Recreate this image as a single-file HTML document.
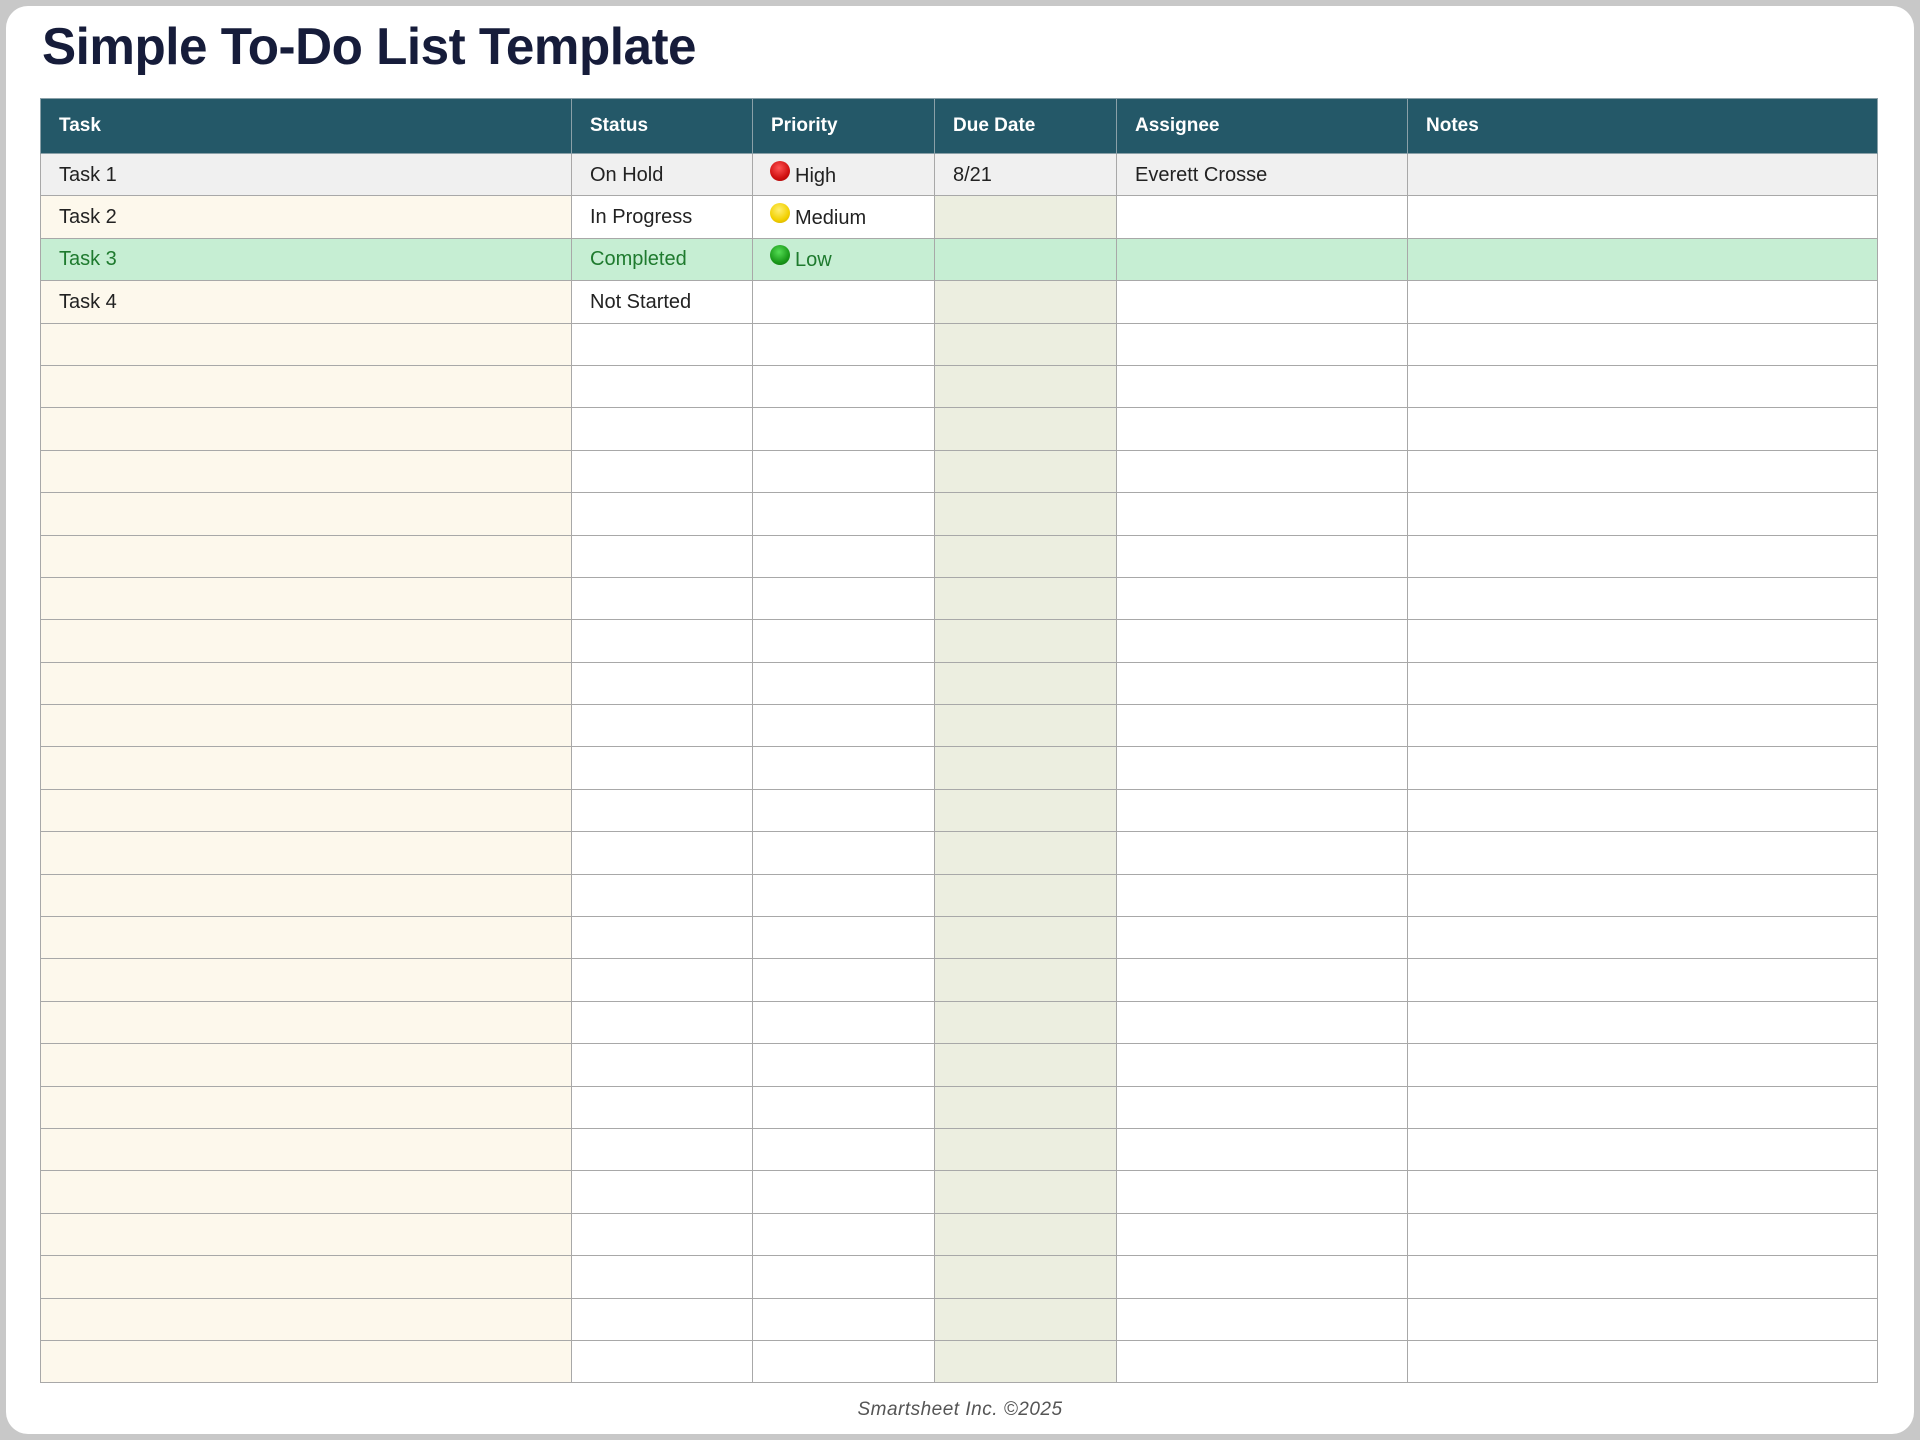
<!DOCTYPE html>
<html><head><meta charset="utf-8"><style>
body{margin:0;width:1920px;height:1440px;background:#c8c8c8;font-family:"Liberation Sans",sans-serif;overflow:hidden;position:relative}
.panel{position:absolute;left:6px;top:6px;width:1908px;height:1428px;background:#fff;border-radius:22px}
h1{position:absolute;left:42px;top:17px;margin:0;font-size:52px;font-weight:bold;color:#161c3a;white-space:nowrap;transform-origin:left top;transform:scaleX(0.985);letter-spacing:-0.5px}
table{position:absolute;left:40px;top:98px;border-collapse:collapse;table-layout:fixed;width:1837px}
td,th{border:1.5px solid #a8a8a8;padding:0 0 0 18px;text-align:left;font-size:20px;line-height:22px;color:#222;height:41.4px;white-space:nowrap;overflow:hidden}
th{background:#245868;color:#fff;height:54px;font-size:19px;border-color:#8aa0a8}
td.t{background:#fdf8ec}td.d{background:#eceee0}
tr.g td{background:#f0f0f0}
tr.c td{background:#c6eed3;color:#1e7a2e}
.dot{display:inline-block;width:20px;height:20px;border-radius:50%;vertical-align:-1px;margin-right:5px;margin-left:-1px;position:relative;top:-2px}
.r{background:radial-gradient(circle at 45% 35%,#f55 0,#d01010 60%,#900 100%)}
.y{background:radial-gradient(circle at 45% 35%,#ffef70 0,#f2d000 60%,#c8a000 100%)}
.gr{background:radial-gradient(circle at 45% 35%,#5d5 0,#1a9a1a 60%,#0a6a0a 100%)}
.f{position:absolute;left:0;width:1920px;top:1399px;text-align:center;font-style:italic;color:#555;font-size:19px;letter-spacing:0.5px}
</style></head><body>
<div class="panel"></div>
<h1>Simple To-Do List Template</h1>
<table>
<colgroup><col style="width:531px"><col style="width:181px"><col style="width:182px"><col style="width:182px"><col style="width:291px"><col style="width:470px"></colgroup>
<tr><th>Task</th><th>Status</th><th>Priority</th><th>Due Date</th><th>Assignee</th><th>Notes</th></tr>
<tr class="g"><td>Task 1</td><td>On Hold</td><td><span class="dot r"></span>High</td><td>8/21</td><td>Everett Crosse</td><td></td></tr>
<tr><td class="t">Task 2</td><td>In Progress</td><td><span class="dot y"></span>Medium</td><td class="d"></td><td></td><td></td></tr>
<tr class="c"><td>Task 3</td><td>Completed</td><td><span class="dot gr"></span>Low</td><td></td><td></td><td></td></tr>
<tr><td class="t">Task 4</td><td>Not Started</td><td></td><td class="d"></td><td></td><td></td></tr>
<tr><td class="t"></td><td></td><td></td><td class="d"></td><td></td><td></td></tr>
<tr><td class="t"></td><td></td><td></td><td class="d"></td><td></td><td></td></tr>
<tr><td class="t"></td><td></td><td></td><td class="d"></td><td></td><td></td></tr>
<tr><td class="t"></td><td></td><td></td><td class="d"></td><td></td><td></td></tr>
<tr><td class="t"></td><td></td><td></td><td class="d"></td><td></td><td></td></tr>
<tr><td class="t"></td><td></td><td></td><td class="d"></td><td></td><td></td></tr>
<tr><td class="t"></td><td></td><td></td><td class="d"></td><td></td><td></td></tr>
<tr><td class="t"></td><td></td><td></td><td class="d"></td><td></td><td></td></tr>
<tr><td class="t"></td><td></td><td></td><td class="d"></td><td></td><td></td></tr>
<tr><td class="t"></td><td></td><td></td><td class="d"></td><td></td><td></td></tr>
<tr><td class="t"></td><td></td><td></td><td class="d"></td><td></td><td></td></tr>
<tr><td class="t"></td><td></td><td></td><td class="d"></td><td></td><td></td></tr>
<tr><td class="t"></td><td></td><td></td><td class="d"></td><td></td><td></td></tr>
<tr><td class="t"></td><td></td><td></td><td class="d"></td><td></td><td></td></tr>
<tr><td class="t"></td><td></td><td></td><td class="d"></td><td></td><td></td></tr>
<tr><td class="t"></td><td></td><td></td><td class="d"></td><td></td><td></td></tr>
<tr><td class="t"></td><td></td><td></td><td class="d"></td><td></td><td></td></tr>
<tr><td class="t"></td><td></td><td></td><td class="d"></td><td></td><td></td></tr>
<tr><td class="t"></td><td></td><td></td><td class="d"></td><td></td><td></td></tr>
<tr><td class="t"></td><td></td><td></td><td class="d"></td><td></td><td></td></tr>
<tr><td class="t"></td><td></td><td></td><td class="d"></td><td></td><td></td></tr>
<tr><td class="t"></td><td></td><td></td><td class="d"></td><td></td><td></td></tr>
<tr><td class="t"></td><td></td><td></td><td class="d"></td><td></td><td></td></tr>
<tr><td class="t"></td><td></td><td></td><td class="d"></td><td></td><td></td></tr>
<tr><td class="t"></td><td></td><td></td><td class="d"></td><td></td><td></td></tr>
</table>
<div class="f">Smartsheet Inc. ©2025</div>
</body></html>
